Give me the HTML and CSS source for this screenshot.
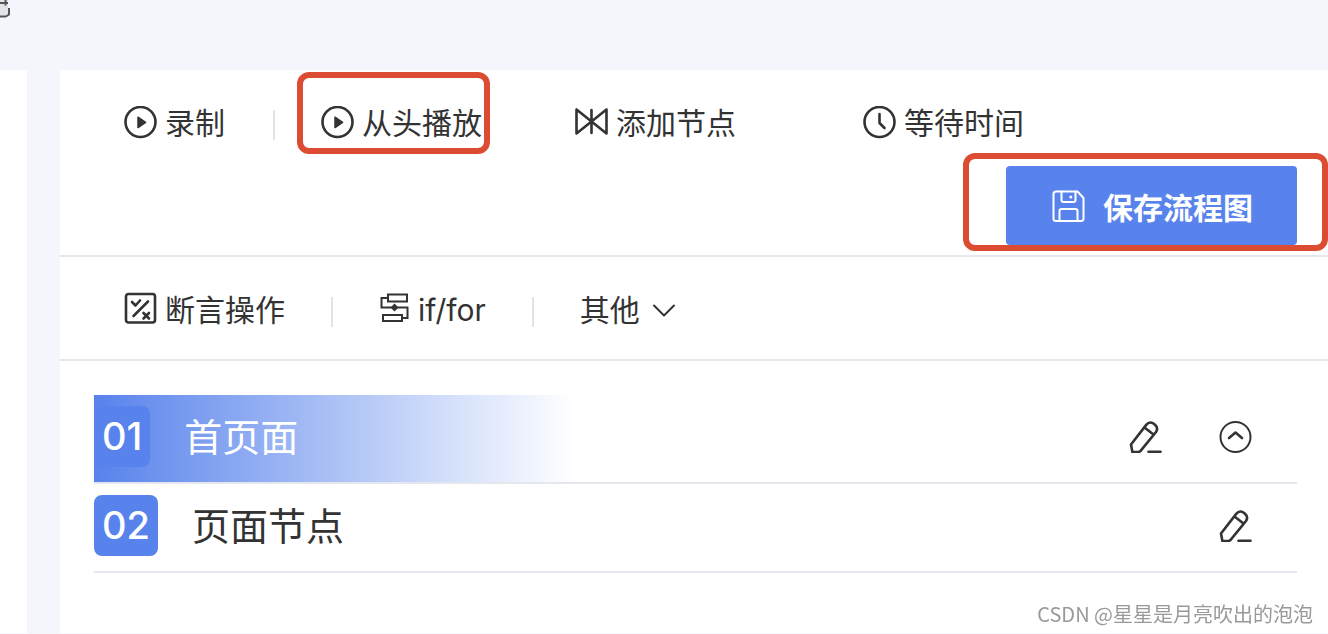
FILE: index.html
```html
<!DOCTYPE html>
<html lang="zh-CN">
  <head>
    <meta charset="utf-8" />
    <meta name="viewport" content="width=device-width, initial-scale=1.0" />
    <title>流程图</title>
    <link rel="stylesheet" href="styles.css">
  </head>
  <body>
    <svg class="sprite" aria-hidden="true">
      <symbol id="play" viewBox="0 0 33 33">
        <circle cx="16.5" cy="16" r="15" />
        <path d="M14 11.200v10.400l7.600-5.200z" fill="currentColor" stroke-width="1.500" />
      </symbol>
      <symbol id="pencil" viewBox="0 0 33 33">
        <path d="M3.400 32 2 24.500 17.200 4.900Q20.400 1 24.400 3.500L26 4.800Q29.600 8 27 12L11.600 30.900 10 32z M15.500 7.500 24.500 14.500" />
        <path d="M19.500 31.700h12" />
      </symbol>
    </svg>

    <header class="topbar">
      <svg class="corner" width="11" height="18" viewBox="0 0 11 18" aria-hidden="true">
        <path d="M0 0h8v16H0z" fill="#e2e4e8" stroke="none" />
        <path d="M0 3h8M5.500 0v5.500M0 16.500h6M9 8v6.500L6 16.500" />
      </svg>
    </header>

    <div class="layout">
      <aside class="side"></aside>
      <main class="card">
        <div class="toolbar">
          <button class="tool">
            <svg class="icon" width="33" height="33"><use href="#play" /></svg>
            <span class="label">录制</span>
          </button>
          <span class="divider"></span>
          <button class="tool tool-play">
            <svg class="icon" width="33" height="33"><use href="#play" /></svg>
            <span class="label">从头播放</span>
            <span class="mark mark-play"></span>
          </button>
          <button class="tool tool-node">
            <svg class="icon" width="33" height="33" viewBox="0 0 33 33">
              <path d="M1.500 3.500v24L31.500 3.500v24z M16.500 4v23" />
            </svg>
            <span class="label">添加节点</span>
          </button>
          <button class="tool">
            <svg class="icon" width="33" height="33" viewBox="0 0 33 33">
              <circle cx="16.500" cy="16" r="15" />
              <path d="M16.500 8v9l5 5" />
            </svg>
            <span class="label">等待时间</span>
          </button>
          <button class="save">
            <svg class="icon" width="33" height="33" viewBox="0 0 33 33">
              <path d="M4 2.500h21.500L31.500 9v20.500q0 2.500-2.500 2.500H4q-2.500 0-2.500-2.500V5q0-2.500 2.500-2.500z" />
              <path d="M9.500 2.500v8.500q0 2 2 2h10q2 0 2-2V2.500M7.500 32v-10q0-2 2-2h14q2 0 2 2v10" />
              <circle cx="18.800" cy="8" r="1.500" fill="currentColor" stroke="none" />
            </svg>
            保存流程图
            <span class="mark mark-save"></span>
          </button>
        </div>

        <div class="toolbar toolbar-sub">
          <button class="tool">
            <svg class="icon" width="33" height="33" viewBox="0 0 33 33">
              <rect x="2" y="2" width="29" height="28.500" rx="2.500" />
              <path d="M8 10l3.500 3.500L16 8.500M24 9.500 9.500 24M19.500 21l5.500 5.500M25 21l-5.500 5.500" />
            </svg>
            <span class="label">断言操作</span>
          </button>
          <span class="divider"></span>
          <button class="tool">
            <svg class="icon" width="31" height="33" viewBox="0 0 31 33">
              <g stroke-width="2" stroke-linejoin="miter">
                <path d="M9 2.500h19v7H9zM4 23h19v6H4zM9 6H2.500v9.500h26V26H23" />
                <path d="M15.500 11.500l4 4-4 4-4-4z" fill="currentColor" stroke="none" />
              </g>
            </svg>
            <span class="label">if/for</span>
          </button>
          <span class="divider"></span>
          <button class="tool tool-more">
            <span class="label">其他</span>
            <svg class="icon icon-thin" width="24" height="33" viewBox="0 0 24 33">
              <path d="M2 13.500l10 10 10-10" />
            </svg>
          </button>
        </div>

        <ol class="nodes">
          <li class="node node-active">
            <span class="badge">01</span>
            <span class="title">首页面</span>
            <button class="action" aria-label="编辑"><svg class="icon" width="33" height="33"><use href="#pencil" /></svg></button>
            <button class="action" aria-label="收起">
              <svg class="icon" width="33" height="33" viewBox="0 0 33 33">
                <circle cx="16.500" cy="17" r="15" stroke-width="2" />
                <path d="M10 18l6.500-5.500 6.500 5.500" />
              </svg>
            </button>
          </li>
          <li class="node">
            <span class="badge">02</span>
            <span class="title">页面节点</span>
            <button class="action" aria-label="编辑"><svg class="icon" width="33" height="33"><use href="#pencil" /></svg></button>
          </li>
        </ol>
      </main>
    </div>
    <div class="watermark">CSDN @星星是月亮吹出的泡泡</div>
  </body>
</html>
```
FILE: styles.css
```css
* {
  box-sizing: border-box;
}
body {
  margin: 0;
  min-height: 100vh;
  display: flex;
  flex-direction: column;
  background: #f4f6fb;
  color: #333;
  font-family: Inter, "Noto Sans CJK SC", sans-serif;
  font-size: 30px;
}
button {
  border: none;
  background: none;
  padding: 0;
  color: inherit;
  font: inherit;
  cursor: pointer;
}
.sprite {
  position: absolute;
  width: 0;
  height: 0;
}
.icon {
  flex: none;
  display: block;
  fill: none;
  stroke: currentColor;
  stroke-width: 2.6;
  stroke-linecap: round;
  stroke-linejoin: round;
}
.icon-thin {
  stroke-width: 2;
}

.topbar {
  height: 70px;
}
.corner {
  display: block;
  fill: none;
  stroke: #555;
  stroke-width: 2;
}
.layout {
  flex: 1;
  display: flex;
  gap: 33px;
  padding-bottom: 1px;
}
.side {
  width: 27px;
  background: #fff;
}
.card {
  flex: 1;
  background: #fff;
}

/* toolbar */
.toolbar {
  display: flex;
  flex-wrap: wrap;
  align-items: center;
  row-gap: 22px;
  padding: 30px 31px 10px 64px;
  border-bottom: 2px solid #e4e7ed;
}
.toolbar-sub {
  padding: 29px 31px 29px 64px;
}
.tool {
  position: relative;
  display: flex;
  align-items: center;
  gap: 8px;
  line-height: 44px;
}
.label {
  height: 44px;
  padding-top: 1px;
}
.toolbar-sub .label {
  padding-top: 2px;
}
.tool-play {
  margin-right: 93px;
}
.tool-node {
  margin-right: 127px;
}
.tool-more {
  gap: 12px;
}
.divider {
  width: 2px;
  height: 30px;
  margin: 6px 46px 0 48px;
  background: #e0e3ea;
}
.toolbar-sub .divider {
  margin: 8px 46px 0;
}
.save {
  position: relative;
  display: flex;
  align-items: center;
  gap: 18px;
  height: 79px;
  margin-left: auto;
  padding: 0 44px 0 46px;
  border-radius: 4px;
  background: #5883ec;
  color: #fff;
  font-weight: bold;
}
.save .icon {
  stroke-width: 2;
}

/* red frames drawn over the buttons */
.mark {
  position: absolute;
  border: 6px solid #dc4c32;
  border-radius: 12px;
  pointer-events: none;
}
.mark-play {
  inset: -28px -8px -10px -24px;
}
.mark-save {
  inset: -13px -31px -6px -43px;
}

/* node list */
.nodes {
  list-style: none;
  margin: 0;
  padding: 34px 31px 34px 34px;
}
.node {
  display: flex;
  align-items: center;
  padding: 11px 45px 15px 0;
  border-bottom: 2px solid #e4e7ed;
  font-size: 38px;
  line-height: 61px;
}
.node-active {
  background: linear-gradient(to right, #5883ec, #fff 40%);
}
.node-active .title {
  color: #fff;
}
.badge {
  padding: 0 8px;
  border-radius: 8px;
  background: #5883ec;
  color: #fff;
  font-weight: 500;
}
.title {
  flex: 1;
  height: 61px;
  padding-top: 1px;
  margin-left: 34px;
}
.action {
  margin-left: 57px;
}

.watermark {
  position: fixed;
  right: 15px;
  bottom: 5px;
  color: #999;
  font-family: "Noto Sans CJK SC", sans-serif;
  font-size: 20px;
  line-height: 30px;
}
```
